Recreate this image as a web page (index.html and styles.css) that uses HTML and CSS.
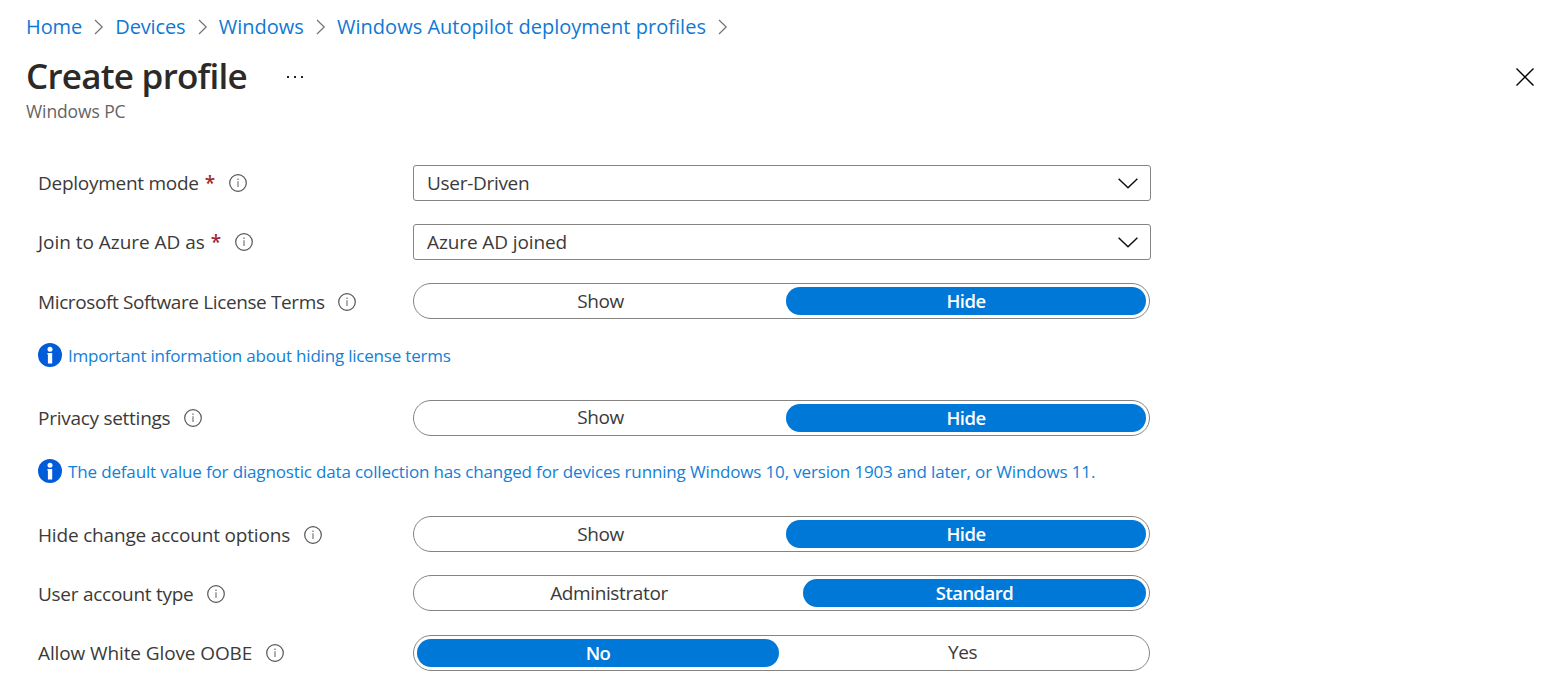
FILE: index.html
```html
<!DOCTYPE html>
<html lang="en">
<head>
<meta charset="utf-8">
<title>Create profile</title>
<link rel="stylesheet" href="styles.css">
</head>
<body>
<svg class="defs" width="0" height="0" aria-hidden="true">
  <symbol id="crumb" viewBox="0 0 10 16"><path d="M1 1 8.2 8 1 15" fill="none" stroke="#767472" stroke-width="1.2"/></symbol>
  <symbol id="info" viewBox="0 0 18 18"><circle cx="9" cy="9" r="8.3" fill="none" stroke="#555" stroke-width="1.2"/><path d="M9 7.3V13" stroke="#777" stroke-width="1.2"/><path d="M9 4.6V6" stroke="#777" stroke-width="1.3"/></symbol>
  <symbol id="note" viewBox="0 0 24 24"><circle cx="12" cy="12" r="12" fill="#015cda"/><circle cx="12" cy="6.3" r="2.5" fill="#fff"/><path d="M9.4 10.1h4.8v10.3H9.9v-8.9h-.5z" fill="#fff"/></symbol>
  <symbol id="chevron" viewBox="0 0 20 11"><path d="M.6.7 10 9.7 19.4.7" fill="none" stroke="#111" stroke-width="1.5"/></symbol>
</svg>
<header>
  <nav class="crumbs">
    <a class="c1">Home</a><svg><use href="#crumb"/></svg>
    <a class="c2">Devices</a><svg><use href="#crumb"/></svg>
    <a class="c3">Windows</a><svg><use href="#crumb"/></svg>
    <a class="c4">Windows Autopilot deployment profiles</a><svg><use href="#crumb"/></svg>
  </nav>
  <div class="heading">
    <h1>Create profile</h1>
    <span class="more"><i></i><i></i><i></i></span>
    <svg class="close" viewBox="0 0 18 18"><path d="M.5.5l17 17M17.5.5l-17 17" stroke="#000" stroke-width="1.4"/></svg>
  </div>
  <div class="subtitle"><span>Windows PC</span></div>
</header>
<main>
  <div class="row">
    <div class="label"><span class="l1">Deployment mode</span><b>*</b><svg><use href="#info"/></svg></div>
    <div class="select"><span class="s1">User-Driven</span><svg><use href="#chevron"/></svg></div>
  </div>
  <div class="row">
    <div class="label"><span class="l2">Join to Azure AD as</span><b>*</b><svg><use href="#info"/></svg></div>
    <div class="select"><span class="s2">Azure AD joined</span><svg><use href="#chevron"/></svg></div>
  </div>
  <div class="row low">
    <div class="label"><span class="l3">Microsoft Software License Terms</span><svg><use href="#info"/></svg></div>
    <div class="toggle"><span class="opt">Show</span><span class="opt on">Hide</span></div>
  </div>
  <div class="note"><svg><use href="#note"/></svg><a class="n1">Important information about hiding license terms</a></div>
  <div class="row">
    <div class="label"><span class="l4">Privacy settings</span><svg><use href="#info"/></svg></div>
    <div class="toggle"><span class="opt">Show</span><span class="opt on">Hide</span></div>
  </div>
  <div class="note"><svg><use href="#note"/></svg><a class="n2">The default value for diagnostic data collection has changed for devices running Windows 10, version 1903 and later, or Windows 11.</a></div>
  <div class="row low">
    <div class="label"><span class="l5">Hide change account options</span><svg><use href="#info"/></svg></div>
    <div class="toggle"><span class="opt">Show</span><span class="opt on">Hide</span></div>
  </div>
  <div class="row low last-gap">
    <div class="label"><span class="l6">User account type</span><svg><use href="#info"/></svg></div>
    <div class="toggle account"><span class="opt">Administrator</span><span class="opt on">Standard</span></div>
  </div>
  <div class="row">
    <div class="label"><span class="l7">Allow White Glove OOBE</span><svg><use href="#info"/></svg></div>
    <div class="toggle glove"><span class="opt on">No</span><span class="opt">Yes</span></div>
  </div>
</main>
</body>
</html>
```
FILE: styles.css
```css
* { box-sizing: border-box; }
body { margin: 0; height: 681px; overflow: hidden; background: #fff; color: #3b3a39; font: 19px/36px "Open Sans", "Noto Sans", sans-serif; white-space: nowrap; }
.defs { display: block; height: 0; }
svg { flex: none; display: block; }
header { padding-left: 26px; height: 165px; }
.crumbs { display: flex; align-items: center; height: 54px; font-size: 20px; color: #0f78d4; }
.crumbs svg { width: 10px; height: 16px; margin: 0 11.2px 0 12px; }
.c1, .c2 { letter-spacing: -0.12px; }
.c4 { letter-spacing: 0.02px; }
.heading { display: flex; align-items: center; height: 46px; }
h1 { margin: 0; padding-bottom: 2px; color: #2b2a29; font-size: 35px; font-weight: 600; width: 220px; letter-spacing: -0.75px; }
.more { display: flex; gap: 5px; margin-left: 41px; }
.more i { width: 2px; height: 2px; background: #222; }
.close { width: 18px; height: 18px; margin: 0 19px 0 auto; }
.subtitle { font-size: 17.5px; line-height: 22px; letter-spacing: -0.1px; color: #666462; }
main { padding-left: 38px; }
.row { display: flex; height: 36px; margin-bottom: 23px; }
.last-gap { margin-bottom: 24px; }
.label { display: flex; align-items: center; width: 375px; }
.low .label { padding-top: 1px; }
.label svg { width: 18px; height: 18px; margin-left: 13.6px; }
.label b { margin-left: 6px; color: #a4262c; font-weight: 600; }
.l1, .l4, .l6 { letter-spacing: -0.27px; }
.l2 { letter-spacing: -0.03px; }
.l3 { letter-spacing: -0.38px; }
.l5 { letter-spacing: -0.18px; }
.l7 { letter-spacing: -0.11px; }
.select { display: flex; align-items: center; justify-content: space-between; width: 738px; padding: 0 12px 0 13px; border: 1px solid #868482; border-radius: 3px; }
.select svg { width: 20px; height: 11px; }
.s1 { letter-spacing: -0.3px; }
.s2 { letter-spacing: -0.1px; }
.toggle { display: grid; grid-template-columns: 369px 360px; width: 737px; padding: 3px; border: 1px solid #868482; border-radius: 18px; }
.account { grid-template-columns: 386px 343px; }
.glove { grid-template-columns: 362px 367px; }
.opt { height: 28px; padding-right: 2px; line-height: 27px; border-radius: 14px; text-align: center; letter-spacing: -0.38px; }
.low .opt { line-height: 28px; }
.glove .opt { padding-right: 0; }
.on { padding-right: 0; background: #0078d7; color: #fff; font-size: 18.5px; font-weight: 600; letter-spacing: -0.55px; }
.note { display: flex; align-items: center; gap: 6px; height: 24px; margin-bottom: 33px; font-size: 17px; color: #1180d6; }
.row:nth-child(3) { margin-bottom: 24px; }
.note svg { width: 24px; height: 24px; }
.note a { padding-top: 1px; }
.n1 { letter-spacing: -0.2px; }
.n2 { letter-spacing: -0.15px; }
```
